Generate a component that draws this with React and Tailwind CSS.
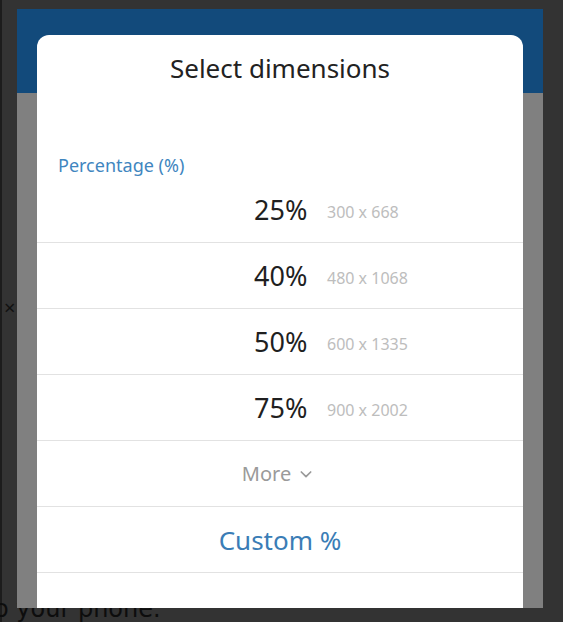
import React from "react";

const rows = [
  { p: "25%", d: "300 x 668" },
  { p: "40%", d: "480 x 1068" },
  { p: "50%", d: "600 x 1335" },
  { p: "75%", d: "900 x 2002" },
];

function Chevron() {
  return (
    <svg width="16" height="16" viewBox="0 0 24 24" fill="none" stroke="#9a9a9a" strokeWidth="2.6" strokeLinecap="round" strokeLinejoin="round">
      <path d="M5 9l7 7 7-7" />
    </svg>
  );
}

export default function App() {
  return (
    <div className="relative w-[563px] h-[622px] bg-[#333333] overflow-hidden" style={{ fontFamily: '"Noto Sans", sans-serif' }}>
      <div className="absolute left-0 top-0 w-[2px] h-full bg-[#1c1c1c]" />
      <span className="absolute left-[4px] top-[296px] text-[20px] leading-6 text-[#111]">×</span>
      <span className="absolute left-[-6px] top-[593px] text-[24px] leading-8 text-[#0d0d0d]" style={{ fontFamily: '"DejaVu Sans", sans-serif' }}>o your phone.</span>

      <div className="relative z-10 ml-[17px] mt-[9px] w-[526px] h-[599px] flex flex-col overflow-hidden bg-[linear-gradient(to_bottom,#124a7b_84px,#808080_84px)]">
        <div className="mx-[20px] mt-[26px] flex-1 bg-white rounded-t-[12px] flex flex-col">
          <div className="pt-[17px] h-[50px] text-center text-[26px] leading-8 text-[#222]">Select dimensions</div>
          <div className="mt-[68px] pl-[21px] text-[18px] leading-6 text-[#3f86bf]">Percentage (%)</div>
          {rows.map((r) => (
            <div key={r.p} className="h-[66px] border-b border-[#e2e2e2] flex items-center pl-[217px]">
              <span className="w-[73px] text-[27px] leading-8 text-[#1f1f1f]">{r.p}</span>
              <span className="text-[16px] leading-5 text-[#bdbdbd] pt-[4px]">{r.d}</span>
            </div>
          ))}
          <div className="h-[66px] border-b border-[#e2e2e2] flex items-center justify-center gap-[7px] pr-[4px]">
            <span className="text-[20px] leading-6 text-[#9a9a9a]">More</span>
            <Chevron />
          </div>
          <div className="h-[66px] border-b border-[#e2e2e2] flex items-center justify-center">
            <span className="text-[26px] leading-8 text-[#3a7db6]">Custom %</span>
          </div>
        </div>
      </div>
    </div>
  );
}
